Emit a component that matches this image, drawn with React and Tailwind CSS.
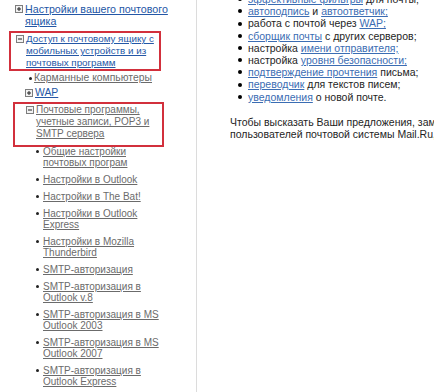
import React from 'react';

const blueLink = 'text-[#2457a6] underline underline-offset-1';
const grayLink = 'text-[#6b6b6b] underline underline-offset-1';
const rLink = 'text-[#3b6db3] underline underline-offset-1';

function TreeBox({ minus }) {
    return (
        <svg width="8" height="8" viewBox="0 0 8 8" className="shrink-0 mt-[2px]">
            <rect x="0.5" y="0.5" width="7" height="7" fill="#f2f2f2" stroke="#7d7d7d" />
            <path d="M2 4h4" stroke="#222" />
            {!minus && <path d="M4 2v4" stroke="#222" />}
        </svg>
    );
}

function Dot({ size = 'w-[3px] h-[3px]', color = 'bg-[#222]' }) {
    return <span className={`shrink-0 rounded-full ${size} ${color}`}></span>;
}

const subItems = [
    ['Общие настройки', 'почтовых програм'],
    ['Настройки в Outlook'],
    ['Настройки в The Bat!'],
    ['Настройки в Outlook', 'Express'],
    ['Настройки в Mozilla', 'Thunderbird'],
    ['SMTP-авторизация'],
    ['SMTP-авторизация в', 'Outlook v.8'],
    ['SMTP-авторизация в MS', 'Outlook 2003'],
    ['SMTP-авторизация в MS', 'Outlook 2007'],
    ['SMTP-авторизация в', 'Outlook Express'],
];

const bullets = 'flex items-center gap-[6px] pl-[8px]';

export default function App() {
    return (
        <div className="flex w-[434px] h-[392px] bg-white overflow-hidden font-['Liberation_Sans',Arial,sans-serif]">
            {/* LEFT TREE */}
            <div className="w-[197px] shrink-0 border-r border-[#dcdcdc] pt-[3px] leading-[12px] whitespace-nowrap">
                <div className="flex gap-[2px] pl-[15px] text-[10.7px]">
                    <TreeBox />
                    <a className={blueLink}>Настройки вашего почтового<br />ящика</a>
                </div>

                {/* highlighted box 1 */}
                <div className="ml-[9px] mt-[4px] w-[152px] h-[40px] border-2 border-[#d2303c] pl-[5px] flex gap-[2px] text-[9.8px]">
                    <TreeBox minus />
                    <a className={blueLink}>Доступ к почтовому ящику с<br />мобильных устройств и из<br />почтовых программ</a>
                </div>

                <div className="flex items-center gap-[2px] pl-[29px] mt-[1px] text-[10.4px]">
                    <Dot />
                    <a className={grayLink}>Карманные компьютеры</a>
                </div>

                <div className="flex gap-[2px] pl-[25px] mt-[3px] text-[10.4px]">
                    <TreeBox />
                    <a className={blueLink}>WAP</a>
                </div>

                {/* highlighted box 2 */}
                <div className="ml-[13px] mt-[3px] w-[151px] h-[45px] border-2 border-[#d2303c] pl-[11px] flex gap-[2px] text-[10px]">
                    <TreeBox minus />
                    <a className={grayLink}>Почтовые программы,<br />учетные записи, POP3 и<br />SMTP сервера</a>
                </div>

                <div className="-mt-[1px] flex flex-col gap-[6px] pl-[36px] leading-[11px] text-[10px]">
                    {subItems.map((lines, i) => (
                        <div key={i} className="flex gap-[4px]">
                            <span className="h-[11px] flex items-center"><Dot /></span>
                            <a className={grayLink}>
                                {lines[0]}
                                {lines[1] && <><br />{lines[1]}</>}
                            </a>
                        </div>
                    ))}
                </div>
            </div>

            {/* RIGHT CONTENT */}
            <div className="flex-1 min-w-0 overflow-hidden pl-[33px] text-[#1e1e1e] text-[10.5px] whitespace-nowrap leading-[12.2px]">
                <ul className="-mt-[7px] flex flex-col">
                    <li className={bullets}><Dot size="w-[4px] h-[4px]" color="bg-black" /><span><a className={rLink}>эффективные фильтры</a> для почты;</span></li>
                    <li className={bullets}><Dot size="w-[4px] h-[4px]" color="bg-black" /><span><a className={rLink}>автоподпись</a> и <a className={rLink}>автоответчик;</a></span></li>
                    <li className={bullets}><Dot size="w-[4px] h-[4px]" color="bg-black" /><span>работа с почтой через <a className={rLink}>WAP;</a></span></li>
                    <li className={bullets}><Dot size="w-[4px] h-[4px]" color="bg-black" /><span><a className={rLink}>сборщик почты</a> с других серверов;</span></li>
                    <li className={bullets}><Dot size="w-[4px] h-[4px]" color="bg-black" /><span>настройка <a className={rLink}>имени отправителя;</a></span></li>
                    <li className={bullets}><Dot size="w-[4px] h-[4px]" color="bg-black" /><span>настройка <a className={rLink}>уровня безопасности;</a></span></li>
                    <li className={bullets}><Dot size="w-[4px] h-[4px]" color="bg-black" /><span><a className={rLink}>подтверждение прочтения</a> письма;</span></li>
                    <li className={bullets}><Dot size="w-[4px] h-[4px]" color="bg-black" /><span><a className={rLink}>переводчик</a> для текстов писем;</span></li>
                    <li className={bullets}><Dot size="w-[4px] h-[4px]" color="bg-black" /><span><a className={rLink}>уведомления</a> о новой почте.</span></li>
                </ul>
                <p className="mt-[13px] leading-[12px]">
                    Чтобы высказать Ваши предложения, замечания и пожелания<br />
                    пользователей почтовой системы Mail.Ru, а также
                </p>
            </div>
        </div>
    );
}
